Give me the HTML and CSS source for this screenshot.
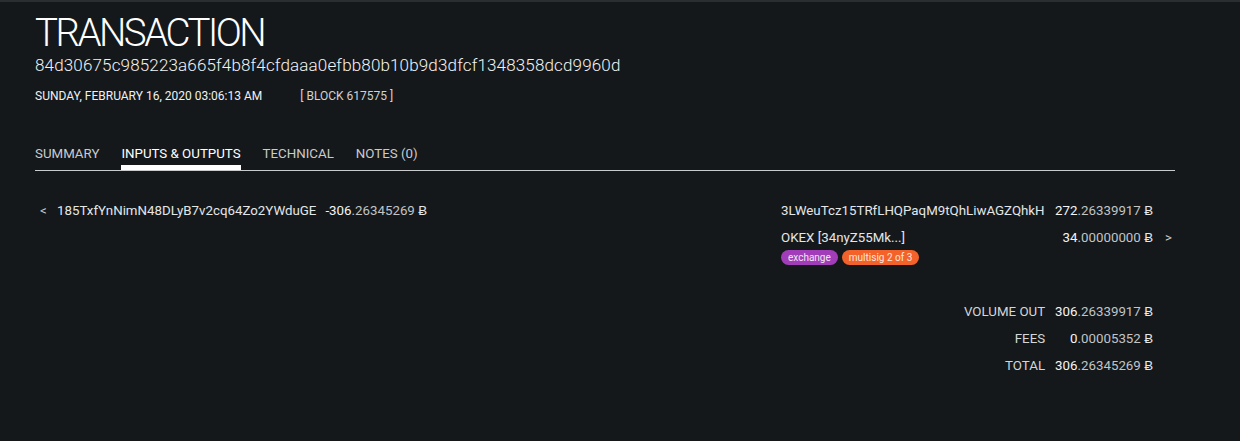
FILE: index.html
```html
<!DOCTYPE html>
<html>
<head>
<meta charset="utf-8">
<link rel="stylesheet" href="styles.css">
</head>
<body>
<div class="page">
  <header class="head">
    <h1 class="title">TRANSACTION</h1>
    <div class="hash">84d30675c985223a665f4b8f4cfdaaa0efbb80b10b9d3dfcf1348358dcd9960d</div>
    <div class="meta"><span>SUNDAY, FEBRUARY 16, 2020 03:06:13 AM</span><span class="block">[ BLOCK 617575 ]</span></div>
  </header>

  <nav class="tabs">
    <span class="tab">SUMMARY</span>
    <span class="tab active">INPUTS &amp; OUTPUTS</span>
    <span class="tab">TECHNICAL</span>
    <span class="tab">NOTES (0)</span>
  </nav>

  <section class="io">
    <div class="inputs">
      <div class="row">
        <span class="arrow">&lt;</span>
        <span class="addr">185TxfYnNimN48DLyB7v2cq64Zo2YWduGE</span>
        <span class="amt">-306<span class="dec">.26345269</span> <span class="btc">Ƀ</span></span>
      </div>
    </div>
    <div class="outputs">
      <div class="orow">
        <div class="ohead">
          <span class="addr">3LWeuTcz15TRfLHQPaqM9tQhLiwAGZQhkH</span>
          <span class="amt">272<span class="dec">.26339917</span> <span class="btc">Ƀ</span></span>
          <span class="arrow r"></span>
        </div>
      </div>
      <div class="orow">
        <div class="ohead">
          <span class="addr">OKEX [34nyZ55Mk...]</span>
          <span class="amt">34<span class="dec">.00000000</span> <span class="btc">Ƀ</span></span>
          <span class="arrow r">&gt;</span>
        </div>
        <div class="tags">
          <span class="tag exchange">exchange</span>
          <span class="tag multisig">multisig 2 of 3</span>
        </div>
      </div>

      <div class="totals">
        <span class="lbl">VOLUME OUT</span><span class="amt">306<span class="dec">.26339917</span> <span class="btc">Ƀ</span></span>
        <span class="lbl">FEES</span><span class="amt">0<span class="dec">.00005352</span> <span class="btc">Ƀ</span></span>
        <span class="lbl">TOTAL</span><span class="amt">306<span class="dec">.26345269</span> <span class="btc">Ƀ</span></span>
      </div>
    </div>
  </section>
</div>
</body>
</html>
```

FILE: styles.css
```css
html, body {
  margin: 0;
  padding: 0;
}
body {
  background: #14181b;
  border-top: 2px solid #2a2e31;
  font-family: Roboto, "Liberation Sans", sans-serif;
  color: #d4d6d8;
  height: 439px;
  box-sizing: border-box;
}
.page {
  padding: 0 65px 0 35px;
}
.head {
  padding-top: 9px;
}
.title {
  margin: 0;
  font-size: 38.5px;
  font-weight: 300;
  line-height: 44px;
  color: #ffffff;
  letter-spacing: -2.5px;
}
.hash {
  font-size: 17px;
  font-weight: 300;
  line-height: 20px;
  color: #f2f3f4;
  letter-spacing: 0.15px;
}
.meta {
  margin-top: 14px;
  font-size: 12px;
  line-height: 14px;
  color: #f0f1f2;
  display: flex;
  gap: 38px;
}
.meta .block {
  color: #d0d2d4;
}
.tabs {
  margin-top: 43px;
  display: flex;
  gap: 22px;
  border-bottom: 1px solid #c8cacc;
  height: 24px;
}
.tab {
  font-size: 13.3px;
  line-height: 16px;
  color: #c9cbcd;
  height: 24px;
  box-sizing: border-box;
}
.tab.active {
  color: #ffffff;
  border-bottom: 5px solid #ffffff;
}
.io {
  display: flex;
  justify-content: space-between;
  margin-top: 32px;
}
.row, .ohead {
  display: flex;
  align-items: baseline;
  font-size: 13.3px;
  line-height: 16px;
}
.inputs .row {
  padding-left: 5px;
}
.inputs .arrow {
  width: 17px;
  color: #c9cbcd;
}
.addr {
  color: #e4e6e8;
}
.inputs .amt {
  margin-left: 9px;
}
.amt {
  color: #f4f5f6;
  white-space: nowrap;
}
.dec {
  color: #c2c4c6;
}
.btc {
  color: #e6e8ea;
}
.outputs {
  width: 394px;
}
.ohead .addr {
  flex: 1;
}
.ohead .arrow.r {
  width: 22px;
  text-align: right;
  padding-right: 3px;
  box-sizing: border-box;
  color: #c9cbcd;
}
.orow + .orow {
  margin-top: 11px;
}
.tags {
  display: flex;
  gap: 4px;
  margin-top: 4px;
}
.tag {
  font-size: 10px;
  line-height: 15px;
  height: 15px;
  padding: 0 7px;
  border-radius: 8px;
  color: #f1e6f3;
}
.tag.exchange {
  background: #a13db8;
}
.tag.multisig {
  background: #f3622a;
  color: #ffe6dc;
}
.totals {
  margin-top: 39px;
  display: grid;
  grid-template-columns: 1fr auto;
  column-gap: 10px;
  row-gap: 11px;
  padding-right: 22px;
  font-size: 13.3px;
  line-height: 16px;
}
.totals .lbl {
  text-align: right;
  color: #d4d6d8;
}
.totals .amt {
  text-align: right;
}
```
